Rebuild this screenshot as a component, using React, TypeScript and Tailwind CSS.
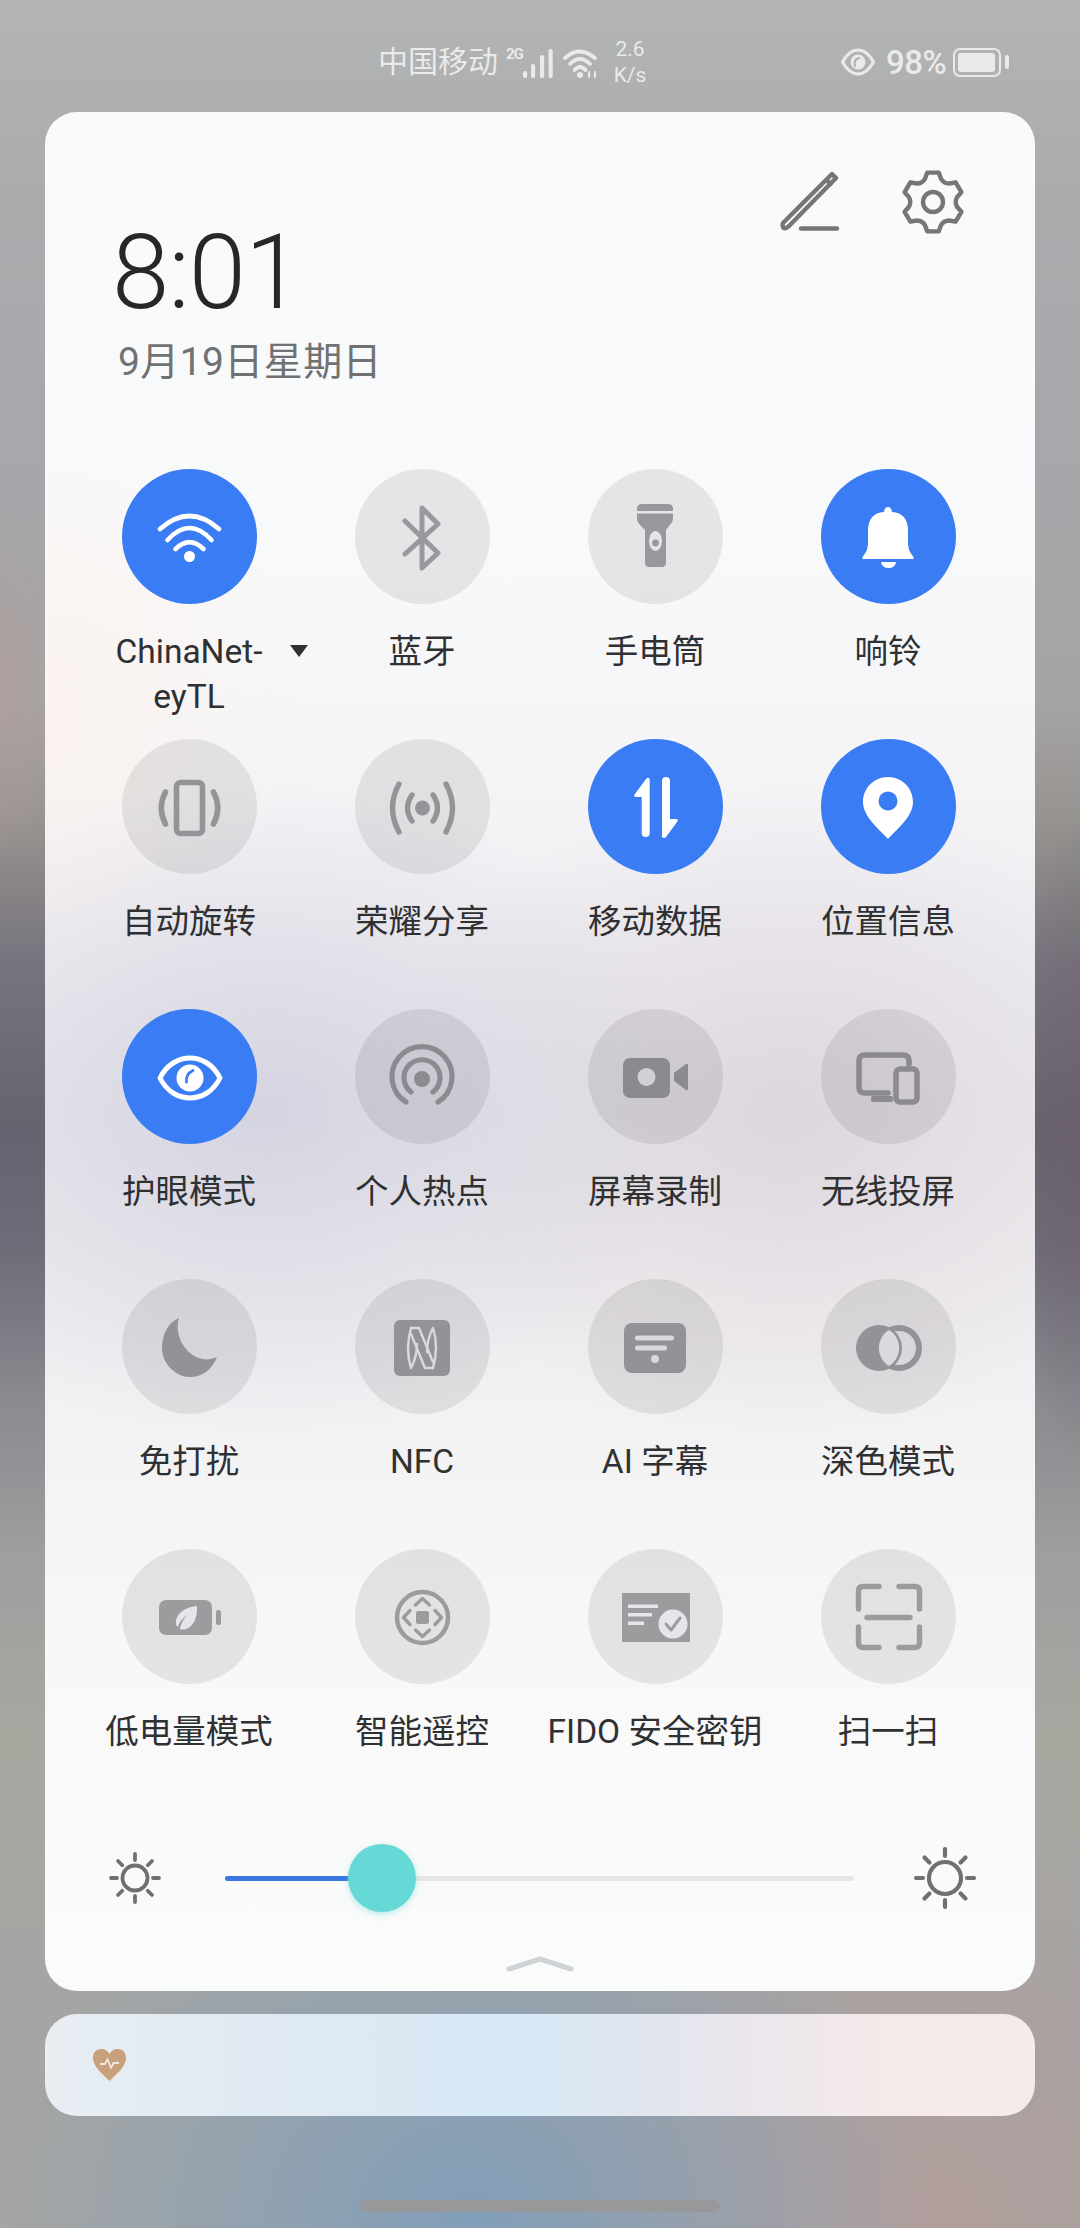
import type { ReactNode } from 'react'

type Tone = { ink: string; paper: string }
type Tile = { label: string; icon: (t: Tone) => ReactNode; on?: boolean }

const BLUE = '#397cf3'

const wifi = ({ ink }: Tone) => (
  <g fill="none" stroke={ink} strokeWidth="4.6" strokeLinecap="round">
    <path d="M11 32Q40.5 6 70 32" />
    <path d="M18.500 43Q40.500 19 62.500 43" />
    <path d="M26.500 52Q40.500 38 54.500 52" />
    <circle cx="40.500" cy="59.500" r="5.500" fill={ink} stroke="none" />
  </g>
)
const bluetooth = ({ ink }: Tone) => (
  <path d="M23 24L56 56L40 71V11L56 27L23 57" fill="none" stroke={ink} strokeWidth="5" strokeLinecap="round" strokeLinejoin="round" />
)
const torch = ({ ink, paper }: Tone) => (
  <g fill={ink}>
    <path d="M22 14V12Q22 7 27 7H53Q58 7 58 12V14Z" />
    <path d="M22 16.500H58V22Q58 25 55 28L51 33V66Q51 70 47 70H34Q30 70 30 66V33L25 28Q22 25 22 22Z" />
    <ellipse cx="40.500" cy="44" rx="6.500" ry="10" fill={paper} />
    <circle cx="40.500" cy="46" r="3.400" fill={ink} />
  </g>
)
const bell = ({ ink }: Tone) => (
  <g fill={ink}>
    <path d="M14.500 62Q14 60 16 58Q20 53 20 46V34Q20 16 36 15Q36.500 10 40 10Q43.500 10 44 15Q60 16 60 34V46Q60 53 64 58Q66 60 65.500 62Z" />
    <path d="M33 65H48Q47 71 40.500 71Q34 71 33 65Z" />
  </g>
)
const rotate = ({ ink }: Tone) => (
  <g fill="none" stroke={ink} strokeWidth="5.600" strokeLinecap="round">
    <rect x="27.500" y="15.500" width="26" height="51" rx="4" />
    <path d="M16.500 25Q8 41 16.500 57" />
    <path d="M64.500 25Q73 41 64.500 57" />
  </g>
)
const share = ({ ink }: Tone) => (
  <g fill="none" stroke={ink} strokeWidth="5.400" strokeLinecap="round">
    <path d="M17 17Q4 41 17 65" />
    <path d="M30 28Q21 41 30 54" />
    <path d="M64 17Q77 41 64 65" />
    <path d="M51 28Q60 41 51 54" />
    <circle cx="40.500" cy="41" r="7.500" fill={ink} stroke="none" />
  </g>
)
const updown = ({ ink }: Tone) => (
  <g fill={ink}>
    <path d="M34.700 12V66a4 4 0 0 1-8 0V30H21Q18 30 20 27L31 12Q33 9.500 34.700 12Z" />
    <path d="M47 14a4 4 0 0 1 8 0V52H61Q64 52 62 55L51 70Q49 72 47 70Z" />
  </g>
)
const pin = ({ ink, paper }: Tone) => (
  <g>
    <path d="M40 10C26 10 15 21 15 35C15 50 32 63 40 72C48 63 65 50 65 35C65 21 54 10 40 10Z" fill={ink} />
    <circle cx="40" cy="34" r="9.500" fill={paper} />
  </g>
)
const eye = ({ ink, paper }: Tone) => (
  <g>
    <path d="M11 41C18 27 30 21 41 21C52 21 64 27 71 41C64 55 52 61 41 61C30 61 18 55 11 41Z" fill="none" stroke={ink} strokeWidth="5" strokeLinejoin="round" />
    <circle cx="41" cy="41" r="13.500" fill={ink} />
    <path d="M37.500 45Q36.500 37 44 33.500" fill="none" stroke={paper} strokeWidth="2.800" strokeLinecap="round" />
  </g>
)
const hotspot = ({ ink }: Tone) => (
  <g fill="none" stroke={ink} strokeWidth="5.200" strokeLinecap="round">
    <path d="M24 65A30 30 0 1 1 56 65" />
    <path d="M29 55A18 18 0 1 1 51 55" />
    <circle cx="40" cy="42" r="8" fill={ink} stroke="none" />
  </g>
)
const record = ({ ink, paper }: Tone) => (
  <g fill={ink}>
    <rect x="8" y="21" width="47" height="40" rx="7" />
    <circle cx="31.500" cy="40" r="9" fill={paper} />
    <path d="M59 36L71 27Q73 26 73 28V52Q73 54 71 53L59 44Z" />
  </g>
)
const cast = ({ ink }: Tone) => (
  <g fill="none" stroke={ink} strokeWidth="5.600" strokeLinecap="round">
    <path d="M61 27V24Q61 18 55 18H17Q11 18 11 24V50Q11 56 17 56H40" />
    <rect x="48" y="32" width="21" height="33" rx="4" />
    <rect x="23" y="59" width="22" height="6" rx="2" fill={ink} stroke="none" />
  </g>
)
const moon = ({ ink }: Tone) => (
  <path d="M30 11C18 16 13 29 13 41C13 57 27 70 41 70C53 70 63 63 68 50C62 53 55 53 50 51C35 46 25 27 30 11Z" fill={ink} />
)
const nfc = ({ ink, paper }: Tone) => {
  const half = (
    <>
      <path d="M29 21H37L51 55" />
      <path d="M29 21Q23 42 29 61Q35 50 35 37" />
    </>
  )
  return (
    <g>
      <rect x="12" y="13" width="56" height="56" rx="6" fill={ink} />
      <g fill="none" stroke={paper} strokeWidth="2.400" strokeLinecap="round" strokeLinejoin="round">
        {half}
        <g transform="rotate(180 40 41)">{half}</g>
      </g>
    </g>
  )
}
const caption = ({ ink, paper }: Tone) => (
  <g>
    <rect x="9" y="16" width="62" height="50" rx="8" fill={ink} />
    <rect x="20" y="28.500" width="39" height="5" rx="2.500" fill={paper} />
    <rect x="20" y="38.500" width="32" height="5" rx="2.500" fill={paper} />
    <circle cx="40" cy="52" r="4" fill={paper} />
  </g>
)
const dark = ({ ink, paper }: Tone) => (
  <g>
    <circle cx="31" cy="41" r="23" fill={ink} />
    <circle cx="51" cy="41" r="20" fill="none" stroke={ink} strokeWidth="6" />
    <path d="M41 23A21 21 0 0 1 41 59A21 21 0 0 1 41 23Z" fill={paper} />
  </g>
)
const saver = ({ ink, paper }: Tone) => (
  <g fill={ink}>
    <rect x="10" y="23" width="53" height="35" rx="7" />
    <rect x="67" y="33" width="5" height="15" rx="2" />
    <path d="M48 29C35 30 26 38 27 47Q27.500 49 29 50Q30 44 38 38Q32 45 31 52C40 55 49 45 48 29Z" fill={paper} />
  </g>
)
const remote = ({ ink }: Tone) => (
  <g fill="none" stroke={ink} strokeWidth="3.400" strokeLinecap="round" strokeLinejoin="round">
    <circle cx="40.500" cy="40.500" r="25.500" strokeWidth="4.500" />
    <rect x="34" y="34" width="13" height="13" rx="2.500" fill={ink} stroke="none" />
    <path d="M33.500 28L40.500 21.500L47.500 28" />
    <path d="M33.500 53L40.500 59.500L47.500 53" />
    <path d="M28 33.500L21.500 40.500L28 47.500" />
    <path d="M53 33.500L59.500 40.500L53 47.500" />
  </g>
)
const fido = ({ ink, paper }: Tone) => (
  <g>
    <path d="M7 16H75V65H7Z" fill={ink} />
    <rect x="13" y="27.500" width="30" height="3.500" fill={paper} />
    <rect x="13" y="36" width="24" height="3.500" fill={paper} />
    <rect x="13" y="44.500" width="16" height="3.500" fill={paper} />
    <circle cx="58" cy="47" r="14.500" fill={paper} />
    <path d="M51 47L56 53L65 41" fill="none" stroke={ink} strokeWidth="3" strokeLinecap="round" strokeLinejoin="round" />
  </g>
)
const scan = ({ ink }: Tone) => (
  <g fill="none" stroke={ink} strokeWidth="5.400" strokeLinecap="round">
    <path d="M10.500 32V14Q10.500 9.500 15 9.500H31" />
    <path d="M51 9.500H67Q71.500 9.500 71.500 14V32" />
    <path d="M10.500 50V66Q10.500 70.500 15 70.500H31" />
    <path d="M51 70.500H67Q71.500 70.500 71.500 66V50" />
    <path d="M19 40.500H62" />
  </g>
)

const rows: { ink: string; paper: string; tiles: Tile[] }[] = [
  {
    ink: '#98999c',
    paper: '#e3e5e7',
    tiles: [
      { label: 'ChinaNet-\neyTL', icon: wifi, on: true },
      { label: '蓝牙', icon: bluetooth },
      { label: '手电筒', icon: torch },
      { label: '响铃', icon: bell, on: true },
    ],
  },
  {
    ink: '#949498',
    paper: '#e0e0e4',
    tiles: [
      { label: '自动旋转', icon: rotate },
      { label: '荣耀分享', icon: share },
      { label: '移动数据', icon: updown, on: true },
      { label: '位置信息', icon: pin, on: true },
    ],
  },
  {
    ink: '#8b8a8f',
    paper: '#d1d0d7',
    tiles: [
      { label: '护眼模式', icon: eye, on: true },
      { label: '个人热点', icon: hotspot },
      { label: '屏幕录制', icon: record },
      { label: '无线投屏', icon: cast },
    ],
  },
  {
    ink: '#939397',
    paper: '#dadade',
    tiles: [
      { label: '免打扰', icon: moon },
      { label: 'NFC', icon: nfc },
      { label: 'AI 字幕', icon: caption },
      { label: '深色模式', icon: dark },
    ],
  },
  {
    ink: '#9b9c9e',
    paper: '#e5e6e9',
    tiles: [
      { label: '低电量模式', icon: saver },
      { label: '智能遥控', icon: remote },
      { label: 'FIDO 安全密钥', icon: fido },
      { label: '扫一扫', icon: scan },
    ],
  },
]

const gearPath = () => {
  const pts: string[] = []
  const at = (deg: number, r: number) => {
    const a = (deg * Math.PI) / 180
    return `${(34 + r * Math.cos(a)).toFixed(1)} ${(34 + r * Math.sin(a)).toFixed(1)}`
  }
  for (let i = 0; i < 6; i++) {
    const a = -90 + 60 * i
    pts.push(`${i === 0 ? 'M' : 'Q' + at(a - 30, 21.5) + ' '}${at(a - 19, 24.5)}`)
    pts.push(`L${at(a - 11, 30)}`)
    pts.push(`L${at(a + 11, 30)}`)
    pts.push(`L${at(a + 19, 24.5)}`)
  }
  pts.push(`Q${at(-120, 21.5)} ${at(-109, 24.5)}Z`)
  return pts.join('')
}

function Sun({ size, ring, from, to, width }: { size: number; ring: number; from: number; to: number; width: number }) {
  const c = size / 2
  return (
    <svg width={size} height={size} viewBox={`0 0 ${size} ${size}`} className="shrink-0">
      <circle cx={c} cy={c} r={ring} fill="none" stroke="#6f7072" strokeWidth={width} />
      {[0, 45, 90, 135, 180, 225, 270, 315].map((d) => (
        <path
          key={d}
          d={`M${c} ${c - from}V${c - to}`}
          stroke="#6f7072"
          strokeWidth={width}
          strokeLinecap="round"
          transform={`rotate(${d} ${c} ${c})`}
        />
      ))}
    </svg>
  )
}

export default function App() {
  return (
    <div className="w-[1080px] h-[2228px] overflow-hidden font-['Roboto','Noto_Sans_CJK_SC',sans-serif] bg-[radial-gradient(ellipse_460px_420px_at_470px_2228px,rgba(128,158,186,0.95),rgba(128,158,186,0)),radial-gradient(ellipse_480px_420px_at_920px_2228px,rgba(178,158,156,0.95),rgba(178,158,156,0)),radial-gradient(ellipse_60px_330px_at_1080px_1140px,rgba(112,92,100,0.5),rgba(112,92,100,0)),radial-gradient(ellipse_70px_180px_at_0px_690px,rgba(176,158,156,0.8),rgba(176,158,156,0)),linear-gradient(180deg,#b3b4b4_0px,#aaabad_200px,#a6a7aa_480px,#a5a4a5_700px,#97938f_820px,#77747e_960px,#65636f_1130px,#6e6c78_1250px,#8a8a90_1400px,#9e9f9f_1560px,#a8a7a0_1740px,#a4a5a4_2000px)]">
      {/* Status bar */}
      <div className="h-[112px] pt-[12px] pl-[378px] pr-[71px] flex items-center justify-between text-[#e9eaea]">
        <div className="flex items-center">
          <span className="text-[30px] leading-none w-[122px] whitespace-nowrap">中国移动</span>
          <span className="ml-[6px] w-[17px] text-[15px] leading-none font-bold tracking-[-1px] mt-[-16px]">2G</span>
          <svg width="30" height="30" viewBox="0 0 30 30" fill="#e9eaea" className="mt-[4px]">
            <rect x="0" y="22" width="4.200" height="7" rx="2" />
            <rect x="8" y="15" width="4.200" height="14" rx="2" />
            <rect x="17" y="6" width="4.200" height="23" rx="2" />
            <rect x="25.500" y="0" width="4.200" height="29" rx="2" />
          </svg>
          <svg width="36" height="30" viewBox="0 0 36 30" className="ml-[10px] mt-[2px]" fill="none" stroke="#e9eaea" strokeWidth="3.800" strokeLinecap="round">
            <path d="M2 10Q16 -3 32 10" />
            <path d="M7 16Q17 6 27 16" />
            <path d="M11.500 22Q17 16 22.500 22" />
            <circle cx="17" cy="27" r="3" fill="#e9eaea" stroke="none" />
            <path d="M26 24V29M32 24V29" strokeWidth="2" />
          </svg>
          <div className="ml-[14px] w-[34px] flex flex-col items-center text-[21px] leading-[26px]">
            <span>2.6</span>
            <span>K/s</span>
          </div>
        </div>
        <div className="flex items-center">
          <svg width="34" height="28" viewBox="0 0 34 28">
            <path d="M1.500 14C6 6 12 2 17 2C22 2 28 6 32.500 14C28 22 22 26 17 26C12 26 6 22 1.500 14Z" fill="none" stroke="#e9eaea" strokeWidth="3.200" strokeLinejoin="round" />
            <circle cx="17" cy="14" r="7.500" fill="#e9eaea" />
            <path d="M14 18Q12 12 18 10" fill="none" stroke="#adaeaf" strokeWidth="2" strokeLinecap="round" />
          </svg>
          <span className="ml-[11px] text-[33px] leading-none font-medium w-[59px] whitespace-nowrap tracking-[-0.5px]">98%</span>
          <div className="ml-[8px] w-[48px] h-[29px] rounded-[7px] border-[2px] border-[#e9eaea] p-[3px]">
            <div className="w-[37px] h-full rounded-[3px] bg-[#e9eaea]" />
          </div>
          <div className="ml-[4px] w-[4px] h-[14px] rounded-full bg-[#e9eaea]" />
        </div>
      </div>

      {/* Quick settings panel */}
      <div className="mx-[45px] h-[1879px] rounded-[32px] overflow-hidden bg-[radial-gradient(ellipse_440px_330px_at_220px_1000px,rgba(196,196,216,0.6),rgba(196,196,216,0)),radial-gradient(ellipse_420px_330px_at_740px_1000px,rgba(210,200,210,0.6),rgba(210,200,210,0)),radial-gradient(ellipse_260px_300px_at_0px_600px,rgba(255,240,232,0.55),rgba(255,240,232,0)),linear-gradient(180deg,#f9fafa_0px,#f8f9fa_420px,#f5f5f7_640px,#f0eff2_820px,#ecebee_1000px,#f0eef0_1200px,#f5f5f6_1420px,#f9f9f9_1620px,#fafbfb_1879px)]">
        <div className="h-[357px] flex justify-between items-start">
          <div className="pt-[111px]">
            <div className="pl-[67px] text-[103px] leading-[100px] font-light tracking-[-1px] text-[#262728]">8:01</div>
            <div className="pl-[73px] mt-[17px] text-[39px] leading-[45px] tracking-[0.4px] text-[#707173] whitespace-nowrap">9月19日星期日</div>
          </div>
          <div className="pt-[56px] pr-[68px] flex items-start gap-[59px]">
            <svg width="60" height="66" viewBox="0 0 60 66" fill="none" stroke="#757678" strokeWidth="4.400" strokeLinecap="round" strokeLinejoin="round">
              <path d="M52 6L56 10L9 58Q6 61 3.500 60Q2 58 3 55Z" />
              <path d="M46.500 12L50.500 16" />
              <path d="M21 60.500H57" />
            </svg>
            <svg width="68" height="68" viewBox="0 0 68 68" fill="none" stroke="#757678" strokeWidth="4.400" strokeLinejoin="round">
              <path d={gearPath()} />
              <circle cx="34" cy="34" r="10" />
            </svg>
          </div>
        </div>

        <div className="pl-[27.500px] pr-[30.500px] grid grid-cols-4 auto-rows-[270px]">
          {rows.flatMap((row) =>
            row.tiles.map((tile) => {
              const tone: Tone = tile.on ? { ink: '#ffffff', paper: BLUE } : { ink: row.ink, paper: row.paper }
              const [first, second] = tile.label.split('\n')
              return (
                <div key={tile.label} className="relative flex flex-col items-center">
                  <div className={`w-[135px] h-[135px] rounded-full flex items-center justify-center ${tile.on ? 'bg-[#397cf3]' : 'bg-black/[0.08]'}`}>
                    <svg width="80" height="80" viewBox="0 0 80 80">
                      {tile.icon(tone)}
                    </svg>
                  </div>
                  <div className="mt-[25px] text-[33.500px] leading-[45px] text-[#2f3032] text-center whitespace-nowrap">
                    {first}
                    {second && <br />}
                    {second}
                  </div>
                  {second && (
                    <div className="absolute left-[217px] top-[176px] w-0 h-0 border-x-[9px] border-x-transparent border-t-[12px] border-t-[#2f3032]" />
                  )}
                </div>
              )
            }),
          )}
        </div>

        {/* Brightness */}
        <div className="mt-[25px] h-[68px] pl-[60px] pr-[55px] flex items-center">
          <Sun size={60} ring={12.5} from={18} to={24} width={3.800} />
          <div className="relative ml-[60px] mr-[56px] flex-1 h-[5px] rounded-full bg-[#e6e7e8]">
            <div className="w-[157px] h-full rounded-full bg-[#3a76e0]" />
            <div className="absolute left-[123px] top-[-31.500px] w-[68px] h-[68px] rounded-full bg-[#66d8d6] shadow-[0_2px_6px_rgba(102,216,214,0.45)]" />
          </div>
          <Sun size={70} ring={16} from={22} to={29} width={4.200} />
        </div>

        <div className="mt-[44px] flex justify-center">
          <svg width="68" height="16" viewBox="0 0 68 16" fill="none" stroke="#cfd3d6" strokeWidth="5" strokeLinecap="round" strokeLinejoin="round">
            <path d="M3 13L34 3L65 13" />
          </svg>
        </div>
      </div>

      {/* Notification strip */}
      <div className="mx-[45px] mt-[23px] h-[102px] pl-[47px] flex items-center rounded-[32px] bg-[linear-gradient(90deg,#e8eef2_0%,#dfe9f2_25%,#d7e9f7_48%,#dfe6f0_58%,#e9e6ec_70%,#f5eaea_85%,#f3ecea_100%)]">
        <svg width="35" height="34" viewBox="0 0 35 34">
          <path d="M17.500 33C12 27 1 19 1 10C1 4 5 1 9.500 1C13 1 16 3 17.500 6C19 3 22 1 25.500 1C30 1 34 4 34 10C34 19 23 27 17.500 33Z" fill="#c9a07c" />
          <path d="M8 16H13L15.500 11L19 20L21.500 15H27" fill="none" stroke="#efe6dd" strokeWidth="1.800" strokeLinejoin="round" />
        </svg>
      </div>

      <div className="mt-[84px] mx-auto w-[360px] h-[12px] rounded-full bg-[#97989a]" />
    </div>
  )
}
